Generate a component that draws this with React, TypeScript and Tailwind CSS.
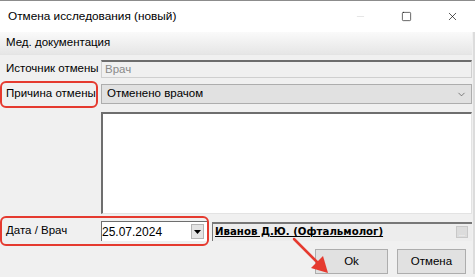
import { ChevronDown, Minus, Square, X } from "lucide-react";

const font = { fontFamily: '"Liberation Sans", Arial, sans-serif' };

export default function App() {
  return (
    <div
      className="relative h-[277px] w-[475px] overflow-hidden whitespace-nowrap border-t border-[#8c8c8c] bg-[#f0f0f0] text-[11.5px] text-black"
      style={font}
    >
      {/* title bar */}
      <div className="flex h-[31px] items-center bg-white pl-[8px]">
        <span className="flex-1 text-[11.8px] leading-none">Отмена исследования (новый)</span>
        <div className="flex h-full items-center">
          <div className="flex w-[46px] justify-center text-[#c7c7c7]">
            <Minus className="size-[11px]" strokeWidth={1} />
          </div>
          <div className="flex w-[46px] justify-center">
            <Square className="size-[11px]" strokeWidth={1.3} />
          </div>
          <div className="flex w-[46px] justify-center">
            <X className="size-[13px]" strokeWidth={1.2} />
          </div>
        </div>
      </div>

      <div className="border-r-2 border-[#dcdcdc] pr-[1px]">
        {/* section header */}
        <div className="flex h-[23px] items-center border-b border-[#e4e4e4] bg-gradient-to-b from-[#fafafa] to-[#e6e6e6] pl-[6px]">
          Мед. документация
        </div>

        {/* source */}
        <div className="mt-[5px] flex h-[18px] items-center">
          <span className="w-[101px] pl-[6px]">Источник отмены</span>
          <div className="flex h-full flex-1 items-center border border-t-2 border-[#cfcfcf] border-t-[#6d6d6d] bg-[#f0f0f0] pl-[3px] text-[#8a8a8a]">
            Врач
          </div>
        </div>

        {/* reason */}
        <div className="mt-[6px] flex h-[20px] items-center">
          <div className="w-[101px] pl-[2px]">
            <span className="flex h-[23px] w-[94px] items-center rounded-[4px] pl-[4px] outline-2 outline-[#e53a2f]">
              Причина отмены
            </span>
          </div>
          <div className="flex h-full flex-1 items-center justify-between border border-[#adadad] bg-[#e1e1e1] pl-[5px] pr-[4px]">
            <span>Отменено врачом</span>
            <ChevronDown className="size-[11px] text-[#444]" strokeWidth={1.4} />
          </div>
        </div>

        {/* comment */}
        <div className="mt-[8px] flex">
          <div className="w-[101px]" />
          <div className="h-[102px] flex-1 border-2 border-b border-r border-[#6e6e6e] border-b-[#e3e3e3] border-r-[#e3e3e3] bg-white" />
        </div>

        {/* date / doctor */}
        <div className="mt-[7px] flex h-[20px] items-center">
          <div className="flex h-full w-[207px] items-center">
            <div className="ml-[2px] flex h-[26px] w-[205px] items-center rounded-[4px] pl-[4px] outline-2 outline-[#e53a2f]">
              <span className="w-[95px]">Дата / Врач</span>
              <div className="flex h-[20px] flex-1 items-center justify-between border-l border-t border-[#6e6e6e] bg-white pr-[3px] text-[12px]">
                <span className="leading-none">25.07.2024</span>
                <span className="flex h-[15px] w-[13px] items-center justify-center border border-[#b5b5b5] bg-[#e4e4e4]">
                  <svg width="7" height="4" viewBox="0 0 7 4">
                    <path d="M0 0h7L3.5 4z" fill="#000" />
                  </svg>
                </span>
              </div>
            </div>
          </div>
          <div className="ml-[5px] flex h-[19px] flex-1 items-center justify-between border-l border-t-2 border-[#777] bg-[#ededed] pl-[2px] pr-[4px]">
            <span
              className="text-[10.2px] font-bold leading-none underline"
              style={{ fontFamily: '"DejaVu Sans", sans-serif' }}
            >
              Иванов Д.Ю. (Офтальмолог)
            </span>
            <span className="flex h-[12px] w-[12px] items-end justify-center border border-[#c8c8c8] bg-[#dcdcdc] text-[7px] leading-none text-white">
              ...
            </span>
          </div>
        </div>

        {/* buttons */}
        <div className="mt-[8px] flex justify-end gap-[9px] pr-[6px]">
          <button className="h-[25px] w-[73px] border border-[#adadad] bg-[#e1e1e1]" type="button">
            Ok
          </button>
          <button className="h-[25px] w-[69px] border border-[#adadad] bg-[#e1e1e1]" type="button">
            Отмена
          </button>
        </div>
      </div>

      {/* annotation arrow */}
      <svg className="absolute left-[290px] top-[234px]" width="45" height="42" viewBox="0 0 45 42">
        <path d="M4 4 L30 30" stroke="#e53a2f" strokeWidth="2.5" strokeLinecap="round" />
        <path d="M38 38 L21 33 L33 21 Z" fill="#e53a2f" />
      </svg>
    </div>
  );
}
